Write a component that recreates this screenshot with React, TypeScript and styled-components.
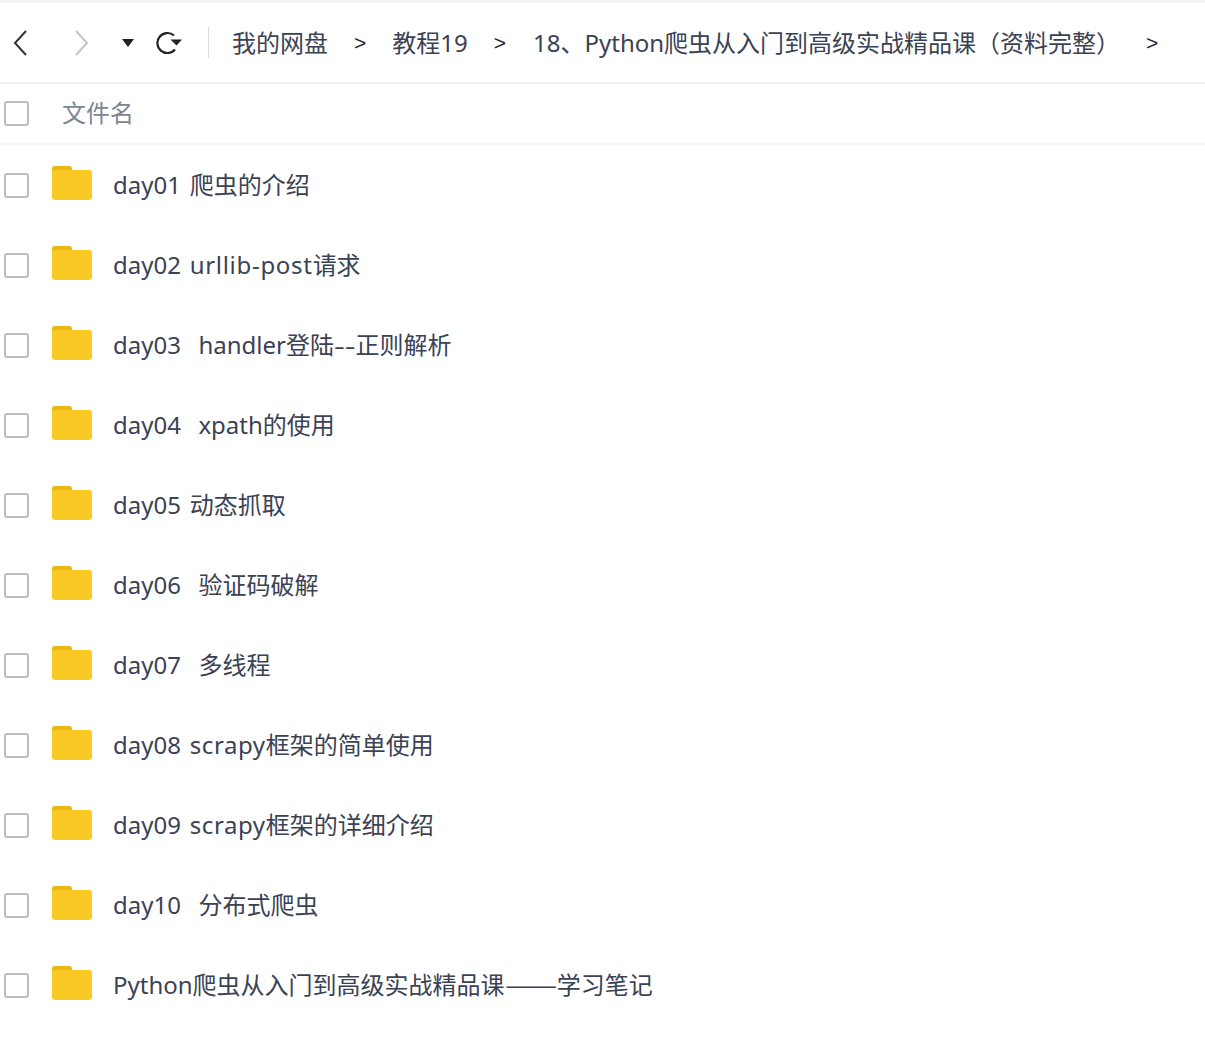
import styled, { createGlobalStyle } from 'styled-components'

const GlobalStyle = createGlobalStyle`
  html, body {
    margin: 0;
    padding: 0;
    background: #fff;
    font-family: "Noto Sans", "Noto Sans CJK SC", sans-serif;
  }
`

const Page = styled.div`
  width: 1205px;
  height: 1052px;
  overflow: hidden;
  background: #fff;
  border-top: 3px solid #f3f3f3;
  box-sizing: border-box;
`

const Toolbar = styled.div`
  height: 79px;
  display: flex;
  align-items: center;
  border-bottom: 2px solid #f2f2f2;
`

const NavIcon = styled.svg<{ $left: number }>`
  flex: none;
  margin-left: ${({ $left }) => $left}px;
`

const Divider = styled.span`
  width: 1px;
  height: 31px;
  margin-left: 26px;
  background: #dcdcdc;
`

const Crumb = styled.span<{ $left: number }>`
  margin-left: ${({ $left }) => $left}px;
  font-size: 24px;
  line-height: 32px;
  color: #3a4254;
  white-space: nowrap;
`

const Sep = styled.span`
  margin-left: 26px;
  font-family: "Liberation Sans", sans-serif;
  font-size: 21px;
  color: #20252f;
`

const Header = styled.div`
  height: 59px;
  display: flex;
  align-items: center;
  border-bottom: 2px solid #f6f6f6;
`

const Check = styled.span`
  flex: none;
  width: 21px;
  height: 21px;
  margin-left: 4px;
  border: 2px solid #bdbdbd;
  border-radius: 3px;
`

const HeaderLabel = styled.span`
  margin-left: 33px;
  padding-bottom: 4px;
  font-size: 24px;
  color: #7d8593;
`

const Row = styled.div`
  height: 80px;
  display: flex;
  align-items: center;
`

const Folder = styled.svg`
  flex: none;
  margin: 0 0 4px 23px;
`

const FileName = styled.span`
  margin-left: 21px;
  padding-bottom: 4px;
  font-size: 24px;
  word-spacing: 2.5px;
  color: #3a4254;
  white-space: pre;
`

// the original font sets some latin runs a little wider than Noto Sans
const Wide = styled.span<{ $track: number }>`
  letter-spacing: ${({ $track }) => $track}px;
`

// dashes are longer in the original font, so stretch the run and reserve the room
const Stretched = styled.span<{ $scale: number; $room: number }>`
  display: inline-block;
  margin-right: ${({ $room }) => $room}px;
  transform: scaleX(${({ $scale }) => $scale});
  transform-origin: left center;
`

const DashRun = styled(Stretched)`
  font-family: "Noto Sans CJK SC", sans-serif;
`

const App = () => (
  <>
    <GlobalStyle />
    <Page>
      <Toolbar>
        <NavIcon $left={13} width="14" height="26" viewBox="0 0 14 26">
          <path d="M13 1 2 13l11 12" fill="none" stroke="#333" strokeWidth="2" />
        </NavIcon>
        <NavIcon $left={48} width="14" height="26" viewBox="0 0 14 26">
          <path d="M1 1l11 12L1 25" fill="none" stroke="#c4c4c4" strokeWidth="2" />
        </NavIcon>
        <NavIcon $left={33} width="12" height="8" viewBox="0 0 12 8">
          <path d="M0 0h12L6 8z" fill="#222" />
        </NavIcon>
        <NavIcon $left={22} width="26" height="24" viewBox="0 0 26 24">
          <path d="M19 18.5A10 10 0 1 1 18 4.5" fill="none" stroke="#222" strokeWidth="2.2" />
          <path d="M14.5 8.5H26L20.5 14.5z" fill="#222" />
        </NavIcon>
        <Divider />
        <Crumb $left={23}>我的网盘</Crumb>
        <Sep>&gt;</Sep>
        <Crumb $left={26}>教程19</Crumb>
        <Sep>&gt;</Sep>
        <Crumb $left={27}>18、Python爬虫从入门到高级实战精品课（资料完整）</Crumb>
        <Sep>&gt;</Sep>
      </Toolbar>
      <Header>
        <Check />
        <HeaderLabel>文件名</HeaderLabel>
      </Header>
      {[
        <>day01 爬虫的介绍</>,
        <>day02 <Wide $track={0.7}>urllib-post</Wide>请求</>,
        <>day03  handler登陆<Stretched $scale={1.4} $room={6}>--</Stretched>正则解析</>,
        <>day04  xpath的使用</>,
        <>day05 动态抓取</>,
        <>day06  验证码破解</>,
        <>day07  多线程</>,
        <>day08 <Wide $track={0.6}>scrapy</Wide>框架的简单使用</>,
        <>day09 <Wide $track={0.6}>scrapy</Wide>框架的详细介绍</>,
        <>day10  分布式爬虫</>,
        <>Python爬虫从入门到高级实战精品课<DashRun $scale={1.3} $room={12}>——</DashRun>学习笔记</>,
      ].map((name, i) => (
        <Row key={i}>
          <Check />
          <Folder width="40" height="34" viewBox="0 0 40 34">
            <path d="M0 3a3 3 0 0 1 3-3h14c2 0 3 1 3 4h17a3 3 0 0 1 3 3v24a3 3 0 0 1-3 3H3a3 3 0 0 1-3-3z" fill="#fac825" />
            <path d="M0 3a3 3 0 0 1 3-3h14c2 0 3 1 3 4H3a3 3 0 0 0-3 2z" fill="#edb712" />
          </Folder>
          <FileName>{name}</FileName>
        </Row>
      ))}
    </Page>
  </>
)

export default App
